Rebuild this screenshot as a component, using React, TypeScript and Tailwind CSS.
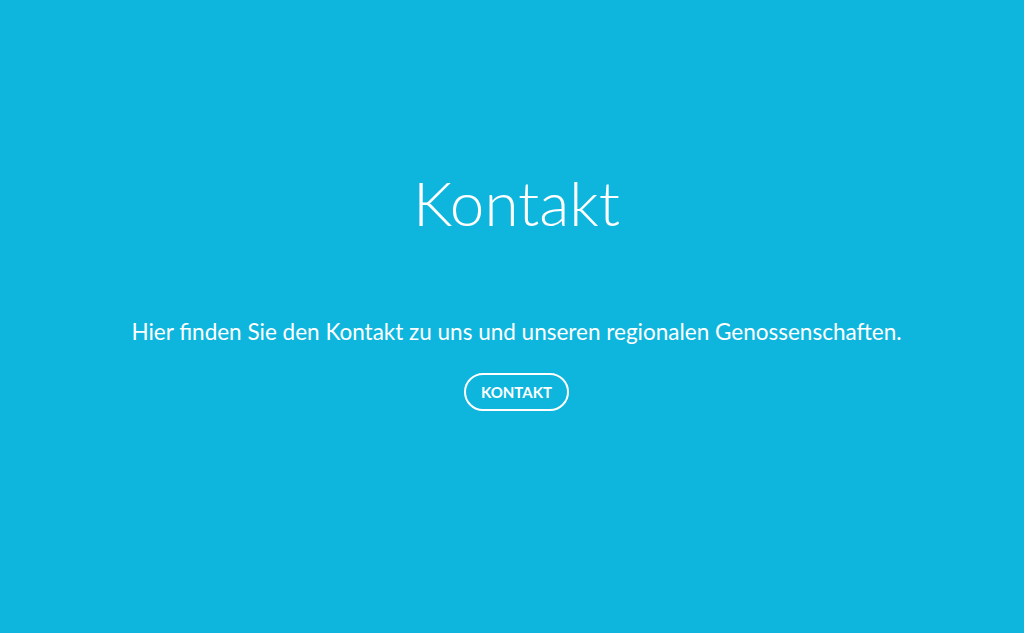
export default function App() {
    return (
        <div
            className="flex h-[633px] w-full flex-col items-center bg-[#0eb6de] pt-[162px] pl-[9px] text-white"
            style={{ fontFamily: 'Lato, "Open Sans", sans-serif' }}>
            <h1 className="text-[62px] leading-[80px] font-light">Kontakt</h1>
            <p className="mt-[75px] text-[22.5px] leading-[30px]">
                Hier finden Sie den Kontakt zu uns und unseren regionalen Genossenschaften.
            </p>
            <a
                href="#"
                className="mt-[26px] flex h-[38px] w-[105px] items-center justify-center rounded-full border-2 border-white text-[15px] font-bold">
                KONTAKT
            </a>
        </div>
    );
}
